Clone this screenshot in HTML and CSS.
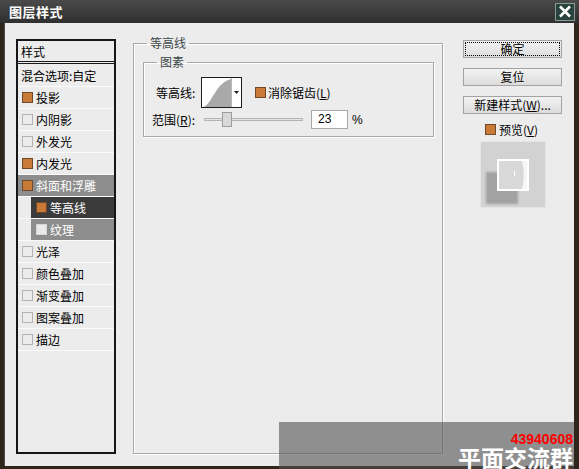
FILE: index.html
```html
<!DOCTYPE html>
<html lang="zh-CN">
<head>
    <meta charset="UTF-8">
    <title>图层样式</title>
    <link rel="stylesheet" href="styles.css">
</head>
<body>
<div class="dialog">
    <!-- Barra de título -->
    <div class="titlebar">
        <span class="title">图层样式</span>
        <span class="close">
            <svg width="14" height="13" viewBox="0 0 14 13"><path d="M2 1.5 L12 11.5 M12 1.5 L2 11.5" stroke="#fff" stroke-width="2.6" fill="none"/></svg>
        </span>
    </div>

    <div class="frame">
        <!-- Lista de estilos -->
        <ul class="style-list">
            <li class="head">样式</li>
            <li class="blend">混合选项:自定</li>
            <li><i class="cb on"></i>投影</li>
            <li><i class="cb"></i>内阴影</li>
            <li><i class="cb"></i>外发光</li>
            <li><i class="cb on"></i>内发光</li>
            <li class="parent"><i class="cb on"></i>斜面和浮雕</li>
            <li class="sub active"><i class="cb on"></i>等高线</li>
            <li class="sub parent"><i class="cb light"></i>纹理</li>
            <li><i class="cb"></i>光泽</li>
            <li><i class="cb"></i>颜色叠加</li>
            <li><i class="cb"></i>渐变叠加</li>
            <li><i class="cb"></i>图案叠加</li>
            <li><i class="cb"></i>描边</li>
        </ul>

        <!-- Panel principal -->
        <fieldset class="group outer">
            <legend>等高线</legend>
            <fieldset class="group inner">
                <legend>图素</legend>
                <div class="row contour-row">
                    <span class="label">等高线:</span>
                    <span class="contour">
                        <svg width="41" height="31" viewBox="0 0 41 31">
                            <rect x="0.5" y="0.5" width="40" height="30" fill="#fff" stroke="#1e1e1e"/>
                            <path d="M2 30 C 11 28, 14 6, 30 2 L30 30 Z" fill="#a9a9a9"/>
                            <line x1="30.5" y1="1" x2="30.5" y2="30" stroke="#b8b8b8"/>
                            <path d="M33 14 h5 l-2.5 3 z" fill="#1e1e1e"/>
                        </svg>
                    </span>
                    <i class="cb on"></i>
                    <span class="check-text">消除锯齿(<u>L</u>)</span>
                </div>
                <div class="row range-row">
                    <span class="label">范围(<u>R</u>):</span>
                    <span class="slider"><span class="thumb"></span></span>
                    <span class="num">23</span>
                    <span class="pct">%</span>
                </div>
            </fieldset>
        </fieldset>

        <!-- Botones -->
        <div class="side">
            <button type="button" class="btn default">确定</button>
            <button type="button" class="btn">复位</button>
            <button type="button" class="btn">新建样式(<u>W</u>)...</button>
            <div class="preview-check"><i class="cb on"></i>预览(<u>V</u>)</div>
            <div class="preview">
                <svg width="66" height="67" viewBox="0 0 66 67">
                    <defs><filter id="blur"><feGaussianBlur stdDeviation="0.8"/></filter></defs>
                    <rect x="0" y="0" width="66" height="67" fill="#d2d2d2"/>
                    <rect x="0.5" y="0.5" width="65" height="66" fill="none" stroke="#e6e6e6"/>
                    <rect x="6" y="31" width="32" height="32" fill="#a2a2a2" filter="url(#blur)"/>
                    <rect x="17" y="18" width="32" height="32" fill="#fff"/>
                    <rect x="19" y="20" width="28" height="28" fill="#d8d8d8"/>
                    <path d="M42 20 L47 20 L47 48 L42 48 Q45.5 34 42 20 Z" fill="#f6f6f6"/>
                    <line x1="34.5" y1="30" x2="34.5" y2="35" stroke="#fff"/>
                </svg>
            </div>
        </div>
    </div>

    <!-- Marca de agua -->
    <div class="watermark">
        <span class="wm-num">43940608</span>
        <span class="wm-text">平面交流群</span>
    </div>
</div>
</body>
</html>
```

FILE: styles.css
```css
body {
    margin: 0;
    background-color: #2e261b; /* fondo del escritorio */
    font-family: "Noto Sans CJK SC", "Liberation Sans", sans-serif;
    font-size: 12px;
    color: #000;
}
.dialog {
    position: relative;
    width: 579px;
    height: 469px;
    overflow: hidden;
}
.titlebar {
    height: 23px;
    display: flex;
    align-items: center;
    justify-content: space-between;
    background: linear-gradient(#4a4a4a, #2f2f2f);
    padding: 0 4px 0 9px;
    box-sizing: border-box;
}
.title {
    color: #fff;
    font-weight: bold;
    font-size: 13px;
    letter-spacing: 0.5px;
}
.close {
    width: 18px;
    height: 16px;
    background-color: #29443e;
    border: 1px solid #8a9894;
    display: flex;
    align-items: center;
    justify-content: center;
}
.frame {
    height: 443px;
    margin: 0 5px 0 4px;
    border-left: 1px solid #4d4d4d;
    background-color: #ececec;
    display: flex;
    align-items: flex-start;
}

/* Lista de estilos */
.style-list {
    list-style: none;
    margin: 16px 0 0 11px;
    padding: 0;
    width: 100px;
    height: 415px;
    border: 2px solid #161616;
    box-sizing: border-box;
    flex-shrink: 0;
}
.style-list li {
    height: 21px;
    display: flex;
    align-items: center;
    padding-left: 4px;
    border-bottom: 1px solid #fbfbfb;
    white-space: nowrap;
}
.style-list .head {
    height: 20px;
    padding-left: 3px;
    border-bottom: 3px double #1a1a1a;
}
.style-list .blend {
    height: 22px;
    padding-left: 3px;
}
.style-list li.parent {
    background-color: #8d8d8d;
    color: #fff;
}
.style-list li.sub {
    padding-left: 18px;
    background: linear-gradient(to right, #ececec 13px, #8d8d8d 13px);
}
.style-list li.sub.active {
    background: linear-gradient(to right, #ececec 13px, #3b3b3b 13px);
    color: #fff;
}

.cb {
    display: inline-block;
    width: 11px;
    height: 11px;
    box-sizing: border-box;
    border: 1px solid #b3b3b3;
    background-color: #ececec;
    margin-right: 3px;
    flex-shrink: 0;
}
.cb.on {
    border-color: #70492a;
    background-color: #c97a36;
}
.cb.light {
    border-color: #d6d6d6;
    background-color: #e9e9e9;
}

/* Grupos */
.group {
    margin: 0;
    padding: 0;
    border: 1px solid #a8a8a8;
    box-shadow: 1px 1px 0 #fff, inset 1px 1px 0 #fff;
    min-inline-size: 0;
}
.group legend {
    padding: 0 3px;
    color: #3c4747;
    line-height: 14px;
}
.outer {
    margin: 13px 0 0 17px;
    width: 310px;
    height: 418px;
    box-sizing: border-box;
    flex-shrink: 0;
}
.outer > legend {
    margin-left: 13px;
}
.inner {
    margin: 5px 0 0 9px;
    width: 291px;
    height: 82px;
    box-sizing: border-box;
}
.inner > legend {
    margin-left: 13px;
}
.row {
    display: flex;
    align-items: center;
}
.contour-row {
    margin-top: 8px;
    padding-left: 12px;
}
.contour-row .label {
    width: 45px;
}
.contour {
    display: flex;
    margin-right: 13px;
}
.check-text {
    margin-left: -1px;
}
.range-row {
    margin-top: 2px;
    padding-left: 8px;
}
.range-row .label {
    width: 52px;
}
.slider {
    position: relative;
    width: 99px;
    height: 15px;
    margin-right: 8px;
}
.slider::before {
    content: "";
    position: absolute;
    left: 0;
    right: 0;
    top: 6px;
    height: 3px;
    box-sizing: border-box;
    border: 1px solid #b4b4b4;
    background-color: #e4e4e4;
}
.thumb {
    position: absolute;
    left: 18px;
    top: 0;
    width: 10px;
    height: 15px;
    box-sizing: border-box;
    border: 1px solid #9c9c9c;
    background-color: #d8d8d8;
}
.num {
    width: 37px;
    height: 19px;
    box-sizing: border-box;
    border: 1px solid #a9a9a9;
    background-color: #fff;
    padding-left: 6px;
    line-height: 17px;
    font-family: "Liberation Sans", sans-serif;
    margin-right: 4px;
}
.pct {
    font-family: "Liberation Sans", sans-serif;
}

/* Columna derecha */
.side {
    margin: 17px 0 0 20px;
    width: 99px;
    display: flex;
    flex-direction: column;
    align-items: center;
    gap: 10px;
}
.btn {
    width: 99px;
    height: 18px;
    padding: 0;
    font-family: inherit;
    font-size: 12px;
    line-height: 16px;
    color: #000;
    border: 1px solid #a3a3a3;
    background: linear-gradient(#f2f2f2, #dcdcdc);
}
.btn.default {
    outline: 1px dotted #000;
    outline-offset: -3px;
}
.preview-check {
    display: flex;
    align-items: center;
    line-height: 13px;
    margin: -1px 0 0 -2px;
}
.preview-check .cb {
    margin-right: 3px;
}
.preview {
    display: flex;
    margin-top: -5px;
}

/* Marca de agua */
.watermark {
    position: absolute;
    left: 279px;
    top: 422px;
    width: 295px;
    height: 47px;
    background-color: rgba(82, 82, 82, 0.6);
    display: flex;
    flex-direction: column;
    align-items: flex-end;
    padding: 11px 1px 0 0;
    box-sizing: border-box;
}
.wm-num {
    color: #ff0000;
    font-family: "Liberation Sans", sans-serif;
    font-weight: bold;
    font-size: 14px;
    line-height: 12px;
}
.wm-text {
    color: #fff;
    font-weight: bold;
    font-size: 23px;
    line-height: 24px;
}
```
